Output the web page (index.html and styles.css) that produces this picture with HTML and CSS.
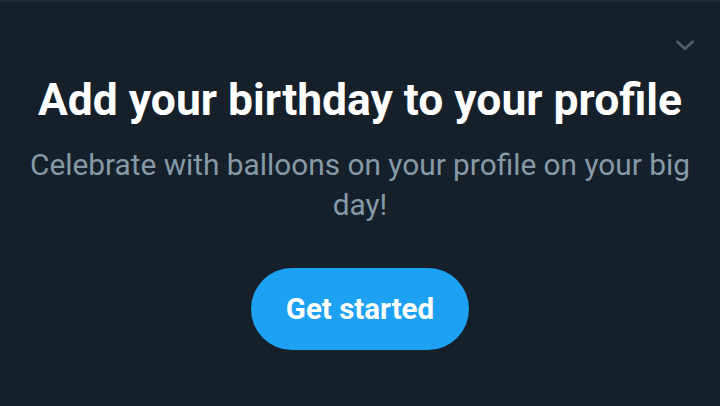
FILE: index.html
```html
<!DOCTYPE html>
<html>
<head>
<meta charset="utf-8">
<link rel="stylesheet" href="styles.css">
</head>
<body>
<div class="card">
  <button class="dismiss" aria-label="Dismiss">
    <svg viewBox="0 0 24 24" width="26" height="26"><path d="M5 9 L12 15.5 L19 9" fill="none" stroke="currentColor" stroke-width="2.6" stroke-linecap="round" stroke-linejoin="round"/></svg>
  </button>
  <h1 class="title">Add your birthday to your profile</h1>
  <p class="subtitle">Celebrate with balloons on your profile on your big day!</p>
  <button class="cta">Get started</button>
</div>
</body>
</html>
```
FILE: styles.css
```css
html, body {
  margin: 0;
  padding: 0;
  background: #15202b;
}
body {
  width: 720px;
  height: 406px;
  overflow: hidden;
  font-family: Roboto, "Liberation Sans", sans-serif;
}
.card {
  position: relative;
  height: 404px;
  border-top: 2px solid #1f2a36;
  display: flex;
  flex-direction: column;
  align-items: center;
  padding: 0 24px;
  box-sizing: content-box;
}
.dismiss {
  position: absolute;
  top: 30px;
  right: 22px;
  background: none;
  border: 0;
  padding: 0;
  color: #4f5d6b;
  display: flex;
}
.title {
  margin: 73px 0 0;
  font-size: 44.4px;
  font-weight: 700;
  line-height: 50px;
  color: #ffffff;
  text-align: center;
  white-space: nowrap;
}
.subtitle {
  margin: 20px 0 0;
  font-size: 29.8px;
  line-height: 40px;
  color: #8899a6;
  text-align: center;
}
.cta {
  margin-top: 43px;
  width: 218px;
  height: 82px;
  border: 0;
  border-radius: 41px;
  background: #1da1f2;
  color: #ffffff;
  font-family: Roboto, "Liberation Sans", sans-serif;
  font-size: 29.5px;
  font-weight: 700;
  padding: 0;
  flex-shrink: 0;
}
```
